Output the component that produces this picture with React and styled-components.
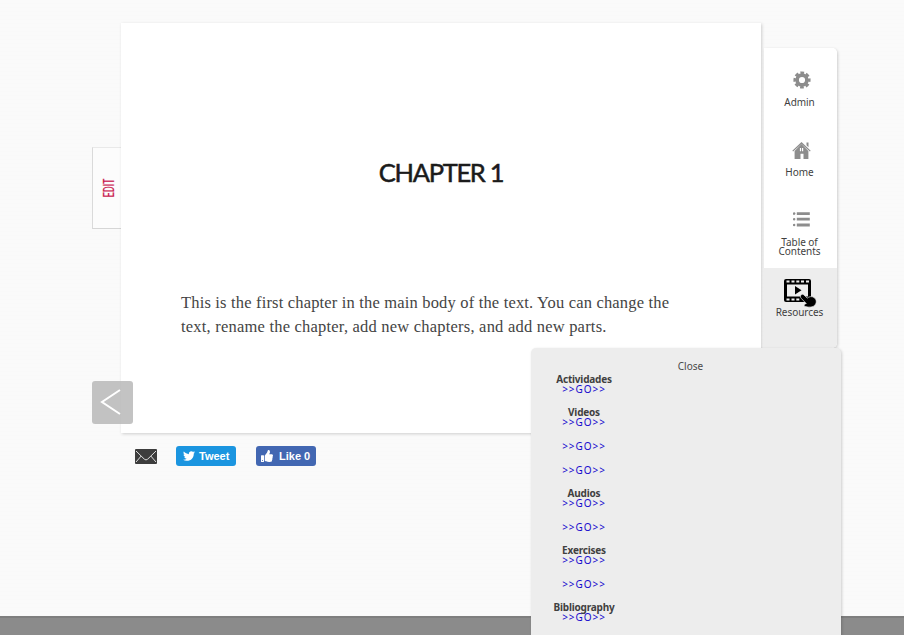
import React from "react";
import styled, { createGlobalStyle } from "styled-components";
import { FaTwitter, FaThumbsUp } from "react-icons/fa";

const GlobalStyle = createGlobalStyle`
  * { box-sizing: border-box; }
  body { margin: 0; overflow: hidden; background: #fafafa; }
`;

const Page = styled.div`
  position: relative;
  display: flex;
  flex-direction: column;
  height: 635px;
  overflow: hidden;
  color: #373d3f;
  font-family: "Noto Sans", sans-serif;
  background: repeating-linear-gradient(#fafafa 0 3px, #f9f9f9 3px 4px);
`;

const Stage = styled.div`
  display: flex;
  align-items: flex-start;
  padding: 23px 0 0 92px;
`;

const EditTab = styled.a`
  display: flex;
  align-items: center;
  justify-content: center;
  width: 29px;
  height: 82px;
  margin-top: 124px;
  padding-left: 3px;
  border: 1px solid #e9e9e9;
  border-right: 0;
  border-left-color: #dadada;
  border-bottom-color: #d6d6d6;
  background: #fcfcfc;
`;

const EditLabel = styled.span`
  font: 14px/16px Roboto, sans-serif;
  color: #c9174e;
  transform: rotate(-90deg) scaleX(0.66);
  -webkit-text-stroke: 0.2px #c9174e;
`;

const Paper = styled.main`
  width: 640px;
  height: 410px;
  padding: 133px 60px 0;
  background: #fff;
  box-shadow: 1px 1px 3px rgba(0, 0, 0, 0.18);
`;

const Heading = styled.h1`
  margin: 0;
  text-align: center;
  font: 400 25.5px/32px Lato, sans-serif;
  letter-spacing: -1.3px;
  color: #1b1b1b;
  -webkit-text-stroke: 0.5px #1b1b1b;
`;

const Copy = styled.p`
  margin: 103px 0 0;
  font: 16.5px/24px "Liberation Serif", serif;
  white-space: nowrap;
  color: #444;
`;

const Line = styled.span`
  display: block;
  letter-spacing: ${(p) => p.$track}px;
`;

const Sidebar = styled.nav`
  width: 73px;
  height: 300px;
  margin: 25px 0 0 3px;
  border-radius: 0 5px 5px 0;
  overflow: hidden;
  background: #fff;
  box-shadow: 1px 1px 3px rgba(0, 0, 0, 0.18);
`;

const NavItem = styled.a`
  display: flex;
  flex-direction: column;
  align-items: center;
  height: ${(p) => (p.$active || p.$first ? 80 : 70)}px;
  padding-top: ${(p) => (p.$first ? 18 : 8)}px;
  background: ${(p) => (p.$active ? "#ededed" : "#fff")};
`;

const IconBox = styled.span`
  display: flex;
  align-items: center;
  justify-content: center;
  width: 36px;
  height: 28px;
  margin: 0 0 4px 3px;
  color: #8d8d8d;
`;

const NavLabel = styled.span`
  margin-right: 2px;
  font-size: 10px;
  line-height: 9px;
  letter-spacing: -0.05px;
  text-align: center;
  color: #3f3f3f;
`;

const PrevButton = styled.button`
  position: absolute;
  left: 92px;
  top: 381px;
  display: flex;
  align-items: center;
  justify-content: center;
  width: 41px;
  height: 43px;
  padding: 0 3px 2px 0;
  border: 0;
  border-radius: 3px;
  background: rgba(180, 180, 180, 0.8);
`;

const ShareBar = styled.div`
  display: flex;
  align-items: center;
  height: 20px;
  margin: 13px 0 0 135px;
`;

const ShareButton = styled.a`
  display: flex;
  align-items: center;
  width: 60px;
  height: 20px;
  padding-left: ${(p) => p.$pad}px;
  gap: ${(p) => p.$gap}px;
  margin-left: ${(p) => p.$left}px;
  border-radius: 3px;
  background: ${(p) => p.$color};
  color: #fff;
  font: bold 11px/20px "Liberation Sans", sans-serif;
  white-space: nowrap;
`;

const Footer = styled.footer`
  height: 19px;
  margin-top: auto;
  background: #8b8b8b;
  border-top: 2px solid #7e7e7e;
`;

const Panel = styled.aside`
  position: absolute;
  left: 531px;
  top: 348px;
  width: 310px;
  height: 300px;
  padding-top: 12px;
  border-radius: 5px 5px 0 0;
  background: #ededed;
  box-shadow: 1px 1px 3px rgba(0, 0, 0, 0.18);
  font-size: 10px;
  line-height: 12px;
`;

const Close = styled.a`
  display: block;
  padding-left: 9px;
  text-align: center;
  color: #4a4a4a;
`;

const Resources = styled.div`
  width: 106px;
  margin-top: 3px;
  text-align: center;
`;

const Group = styled.section`
  display: flex;
  flex-direction: column;
  margin-bottom: 14px;
`;

const GroupTitle = styled.strong`
  height: 10px;
  line-height: 9px;
  letter-spacing: -0.2px;
  color: #404040;
`;

const Go = styled.a`
  height: 9px;
  line-height: 9px;
  margin-bottom: 15px;
  letter-spacing: 0.95px;
  color: #1608cd;
  &:last-child { margin-bottom: 0; }
`;

const GearIcon = () => (
  <svg width="18" height="18" viewBox="-9 -9 18 18" fill="none" stroke="currentColor">
    <circle r="4.9" strokeWidth="3.6" />
    <circle r="7.2" strokeWidth="2.8" strokeDasharray="3.6 2.055" strokeDashoffset="1.8" />
  </svg>
);

const HomeIcon = () => (
  <svg width="20" height="18" viewBox="0.5 -0.5 20 18" fill="currentColor">
    <path d="M10 .6 19.2 9.2l-.8.9L10 2.4 1.6 10.1l-.8-.9zM15 1h2v4.8l-2-2z" />
    <path fillRule="evenodd" d="M10 2.6 16.9 9.4V17.4H12v-5.2H9v5.2H3.1V9.4zM8.4 6.4v3.4h1.2V6.4zm2.1 0v3.4h1.2V6.4z" />
  </svg>
);

const ListIcon = () => (
  <svg width="18" height="16" viewBox="0.7 0 18 16" fill="currentColor">
    <circle cx="1.8" cy="1.6" r="1.3" /><circle cx="1.8" cy="7.2" r="1.3" /><circle cx="1.8" cy="13" r="1.3" />
    <path d="M4.5.2h13v2.8h-13zM4.5 5.8h13v2.8h-13zM4.5 11.6h13v2.8h-13z" />
  </svg>
);

const FilmIcon = () => (
  <svg width="34" height="30" viewBox="1 -3 34 30" overflow="visible">
    <rect x="0" y="1" width="27" height="23" rx="2" />
    <path fill="#ededed" d="M3 6.5h21v12H3zM2.5 2.4h3v2h-3zM7.5 2.4h3v2h-3zM12.3 2.4h3v2h-3zM17 2.4h3v2h-3zM22 2.4h3v2h-3zM2.5 20.4h3v2h-3zM7.5 20.4h3v2h-3zM12.3 20.4h3v2h-3z" />
    <path d="m11 8 6.5 4.2L11 16.4z" />
    <path stroke="#ededed" strokeWidth=".7" d="M17 17c.9-1.2 2-1 3 0l3.2 3.1c2-1.6 4.7-2.1 6.8-.6 2.7 1.7 2.9 5.2 1.1 7.4-2 2.5-5.8 2.7-10 1.6-1.5-.7-1.4-2.3.2-2.6l1-.3-5-5.2c-1-.8-1.2-2.3-.3-3.4z" />
  </svg>
);

const MailIcon = () => (
  <svg width="22" height="15" viewBox="0 0 22 15">
    <rect width="22" height="15" rx="1" fill="#3d3d3d" />
    <path d="m1 2 8.4 8.2q1.6 1.5 3.2 0L21 2M1 13l5.2-6M21 13l-5.2-6" fill="none" stroke="#ddd" strokeWidth="1" />
  </svg>
);

const navItems = [
  { label: "Admin", icon: <GearIcon /> },
  { label: "Home", icon: <HomeIcon /> },
  { label: "Table of Contents", icon: <ListIcon /> },
  { label: "Resources", icon: <FilmIcon />, active: true },
];

const groups = [
  ["Actividades", 1],
  ["Videos", 3],
  ["Audios", 2],
  ["Exercises", 2],
  ["Bibliography", 1],
];

export default function App() {
  return (
    <Page>
      <GlobalStyle />
      <Stage>
        <EditTab><EditLabel>EDIT</EditLabel></EditTab>
        <Paper>
          <Heading>CHAPTER 1</Heading>
          <Copy>
            <Line $track={0.175}>This is the first chapter in the main body of the text. You can change the</Line>
            <Line $track={0.21}>text, rename the chapter, add new chapters, and add new parts.</Line>
          </Copy>
        </Paper>
        <Sidebar>
          {navItems.map((item, i) => (
            <NavItem key={item.label} $first={i === 0} $active={item.active}>
              <IconBox>{item.icon}</IconBox>
              <NavLabel>{item.label}</NavLabel>
            </NavItem>
          ))}
        </Sidebar>
      </Stage>
      <ShareBar>
        <MailIcon />
        <ShareButton $left={19} $pad={7} $gap={4} $color="#1b95e0"><FaTwitter size={12} />Tweet</ShareButton>
        <ShareButton $left={20} $pad={5} $gap={6} $color="#4267b2"><FaThumbsUp size={12} />Like 0</ShareButton>
      </ShareBar>
      <Footer />
      <PrevButton aria-label="Previous">
        <svg width="22" height="28" viewBox="0 0 22 28" fill="none" stroke="#fff" strokeWidth="2">
          <path d="M20 2 2 14l18 12" />
        </svg>
      </PrevButton>
      <Panel>
        <Close>Close</Close>
        <Resources>
          {groups.map(([title, count]) => (
            <Group key={title}>
              <GroupTitle>{title}</GroupTitle>
              {Array.from({ length: count }, (_, i) => (
                <Go key={i}>&gt;&gt;GO&gt;&gt;</Go>
              ))}
            </Group>
          ))}
        </Resources>
      </Panel>
    </Page>
  );
}
